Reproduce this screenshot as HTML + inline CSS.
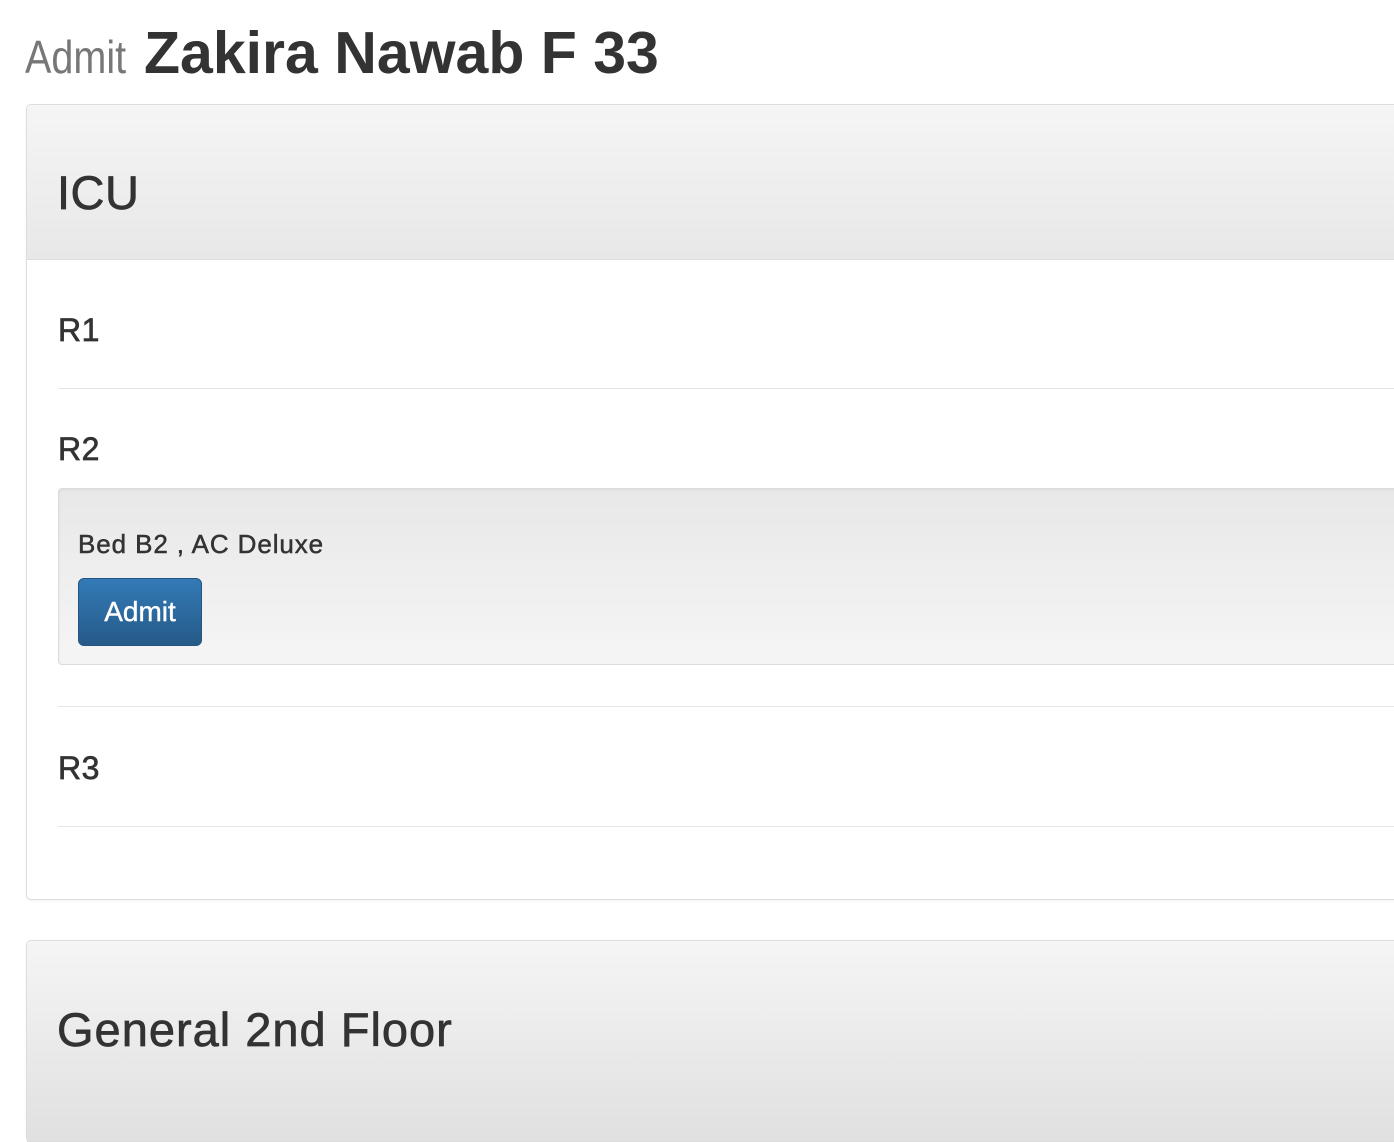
<!DOCTYPE html>
<html><head><style>
body{margin:0;width:1394px;height:1094px;overflow:hidden;background:#fff;font-family:"Liberation Sans",Arial,sans-serif;color:#333;position:relative}
.a{position:absolute;white-space:nowrap}
.m{-webkit-text-stroke:0.7px #333}
.panel{position:absolute;left:26px;width:1400px;border:1px solid #ddd;border-radius:5px;background:#fff;box-shadow:0 1px 2px rgba(0,0,0,.05)}
.hd{background:linear-gradient(#f5f5f5,#e8e8e8);border-bottom:1px solid #ddd;border-radius:5px 5px 0 0}
.line{position:absolute;left:58px;width:1400px;height:1px;background:#e5e5e5}
</style></head><body>
<div class="a" style="left:25px;top:34px;font-size:46px;line-height:46px;color:#777;transform:scaleX(0.86);transform-origin:left top">Admit</div>
<div class="a" style="left:144px;top:20px;font-size:59px;line-height:66px;font-weight:bold">Zakira Nawab F 33</div>

<div class="panel" style="top:104px;height:794px">
 <div class="hd" style="height:154px"></div>
</div>
<div class="a m" style="left:57px;top:165px;font-size:47px;line-height:56px;letter-spacing:0.5px">ICU</div>
<div class="a m" style="left:58px;top:310px;font-size:32px;line-height:40px;letter-spacing:0.5px">R1</div>
<div class="line" style="top:388px"></div>
<div class="a m" style="left:58px;top:429px;font-size:32px;line-height:40px;letter-spacing:0.5px">R2</div>
<div style="position:absolute;left:58px;top:488px;width:1400px;height:175px;border:1px solid #dcdcdc;border-radius:4px;background:linear-gradient(#e8e8e8,#f5f5f5);box-shadow:inset 0 1px 3px rgba(0,0,0,.05)"></div>
<div class="a m" style="left:78px;top:529px;font-size:26px;line-height:30px;letter-spacing:0.9px;-webkit-text-stroke:0.5px #333">Bed B2 , AC Deluxe</div>
<div class="a" style="left:78px;top:578px;width:124px;height:68px;border:1px solid #245580;border-radius:6px;background:linear-gradient(#337ab7,#265a88);color:#fff;font-size:28px;line-height:66px;text-align:center;box-sizing:border-box;-webkit-text-stroke:0.4px #fff">Admit</div>
<div class="line" style="top:706px"></div>
<div class="a m" style="left:58px;top:748px;font-size:32px;line-height:40px;letter-spacing:0.5px">R3</div>
<div class="line" style="top:826px"></div>

<div class="panel" style="top:940px;height:200px">
 <div class="hd" style="height:200px;background:linear-gradient(#f5f5f5,#e0e0e0)"></div>
</div>
<div class="a m" style="left:57px;top:1002px;font-size:47px;line-height:56px;letter-spacing:1px">General 2nd Floor</div>
</body></html>
